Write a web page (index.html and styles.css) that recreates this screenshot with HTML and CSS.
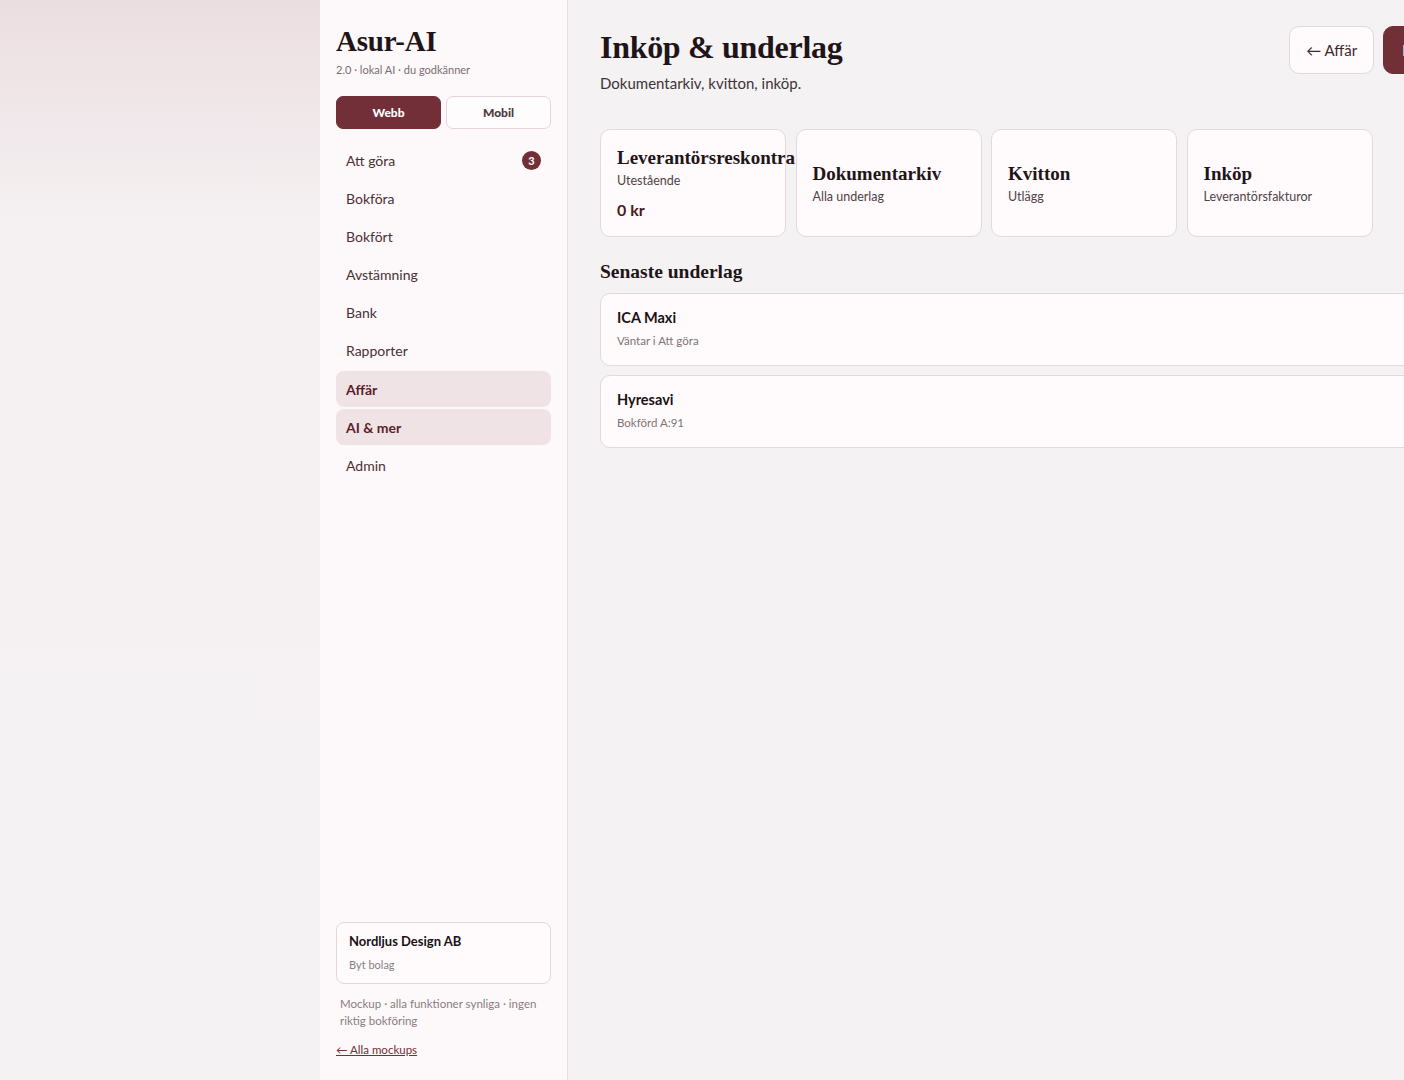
FILE: index.html
```html
<!DOCTYPE html>
<html lang="sv">
<head>
    <meta charset="UTF-8">
    <meta name="viewport" content="width=device-width, initial-scale=1.0">
    <title>Asur-AI · Inköp &amp; underlag</title>
    <link rel="stylesheet" href="styles.css">
</head>
<body>
    <div class="shell">
        <aside class="sidebar">
            <div class="brand">
                <h1>Asur-AI</h1>
                <p>2.0 · lokal AI · du godkänner</p>
            </div>
            <div class="mode-toggle">
                <button class="mode-btn active">Webb</button>
                <button class="mode-btn">Mobil</button>
            </div>
            <nav class="nav">
                <a class="nav-item" href="#">Att göra <span class="badge">3</span></a>
                <a class="nav-item" href="#">Bokföra</a>
                <a class="nav-item" href="#">Bokfört</a>
                <a class="nav-item" href="#">Avstämning</a>
                <a class="nav-item" href="#">Bank</a>
                <a class="nav-item" href="#">Rapporter</a>
                <a class="nav-item selected" href="#">Affär</a>
                <a class="nav-item selected" href="#">AI &amp; mer</a>
                <a class="nav-item" href="#">Admin</a>
            </nav>
            <div class="sidebar-foot">
                <div class="company">
                    <strong>Nordljus Design AB</strong>
                    <span>Byt bolag</span>
                </div>
                <p class="note">Mockup · alla funktioner synliga · ingen riktig bokföring</p>
                <a class="back-link" href="#">← Alla mockups</a>
            </div>
        </aside>

        <main class="main">
            <header class="page-head">
                <div>
                    <h2>Inköp &amp; underlag</h2>
                    <p>Dokumentarkiv, kvitton, inköp.</p>
                </div>
                <div class="actions">
                    <button class="btn">← Affär</button>
                    <button class="btn primary">Nytt</button>
                </div>
            </header>

            <section class="tiles">
                <div class="tile">
                    <h3>Leverantörsreskontra</h3>
                    <span>Utestående</span>
                    <b class="amount">0 kr</b>
                </div>
                <div class="tile">
                    <h3>Dokumentarkiv</h3>
                    <span>Alla underlag</span>
                </div>
                <div class="tile">
                    <h3>Kvitton</h3>
                    <span>Utlägg</span>
                </div>
                <div class="tile">
                    <h3>Inköp</h3>
                    <span>Leverantörsfakturor</span>
                </div>
            </section>

            <h4 class="section-title">Senaste underlag</h4>
            <div class="rows">
                <div class="row">
                    <strong>ICA Maxi</strong>
                    <span>Väntar i Att göra</span>
                </div>
                <div class="row">
                    <strong>Hyresavi</strong>
                    <span>Bokförd A:91</span>
                </div>
            </div>
        </main>
    </div>
</body>
</html>
```

FILE: styles.css
```css
html, body {
    margin: 0;
    height: 100%;
}
body {
    font-family: Lato, "Noto Sans", sans-serif;
    color: #1f1519;
    background: linear-gradient(180deg, #ebdee1 0, #f5f1f2 230px, #f5f2f3 100%);
    overflow: hidden;
}
.shell {
    display: flex;
    margin-left: 320px;
    width: 1163px;
    min-height: 100vh;
}
.sidebar {
    width: 248px;
    flex-shrink: 0;
    box-sizing: border-box;
    padding: 24px 16px 23px;
    background: #fdf8f9;
    border-right: 1px solid #e9dfe2;
    display: flex;
    flex-direction: column;
    height: 1080px;
}
.brand h1 {
    font-family: "Liberation Serif", serif;
    font-size: 29px;
    font-weight: 700;
    margin: 0;
    line-height: 34px;
    letter-spacing: -0.2px;
}
.brand p {
    margin: 5px 0 0;
    font-size: 11px;
    color: #7a6d72;
}
.mode-toggle {
    display: flex;
    gap: 5px;
    margin-top: 20px;
}
.mode-btn {
    flex: 1;
    height: 33px;
    border-radius: 7px;
    border: 1px solid #e3d5d9;
    background: #fffcfd;
    font-family: inherit;
    font-weight: 900;
    font-size: 12px;
    color: #4a3a40;
}
.mode-btn.active {
    background: #722f37;
    border-color: #722f37;
    color: #fff;
}
.nav {
    display: flex;
    flex-direction: column;
    gap: 2.2px;
    margin-top: 13px;
}
.nav-item {
    display: flex;
    align-items: center;
    justify-content: space-between;
    height: 36px;
    padding: 0 10px;
    border-radius: 8px;
    font-size: 14px;
    color: #4a3038;
    text-decoration: none;
}
.nav-item.selected {
    background: #f0e3e6;
    color: #5a1f2a;
    font-weight: 700;
}
.badge {
    width: 19px;
    height: 19px;
    border-radius: 50%;
    background: #722f37;
    color: #fff;
    font-size: 11px;
    font-weight: 700;
    display: flex;
    align-items: center;
    justify-content: center;
}
.sidebar-foot {
    margin-top: auto;
}
.company {
    display: flex;
    flex-direction: column;
    gap: 9px;
    padding: 10px 12px 12px;
    border: 1px solid #e4d6da;
    border-radius: 8px;
    background: #fffbfc;
}
.company strong {
    font-size: 13px;
    color: #1a1216;
}
.company span {
    font-size: 11px;
    color: #8a7d82;
}
.note {
    margin: 11px 0 0;
    padding: 0 4px;
    font-size: 11.5px;
    line-height: 17px;
    color: #8a7d82;
}
.back-link {
    display: inline-block;
    margin-top: 14px;
    font-size: 11.5px;
    color: #722f37;
}
.main {
    flex: 1;
    min-width: 0;
    background: #f5f2f3;
    padding: 26px 32px;
}
.page-head {
    display: flex;
    justify-content: space-between;
    align-items: flex-start;
}
.page-head h2 {
    font-family: "Liberation Serif", serif;
    font-size: 32px;
    font-weight: 700;
    margin: 0;
    line-height: 42px;
    letter-spacing: -0.3px;
}
.page-head p {
    margin: 6px 0 0;
    font-size: 15px;
    color: #3e3338;
}
.actions {
    display: flex;
    gap: 9px;
}
.btn {
    height: 48px;
    padding: 0 16px;
    border-radius: 10px;
    border: 1px solid #e4d6da;
    background: #fffbfc;
    font-family: inherit;
    font-size: 15px;
    color: #3a2a30;
}
.btn.primary {
    background: #722f37;
    border-color: #722f37;
    color: #fff;
    font-weight: 700;
    padding: 0 18px;
}
.tiles {
    display: grid;
    grid-template-columns: repeat(4, 186px);
    gap: 9.5px;
    margin-top: 37px;
}
.tile {
    height: 108px;
    box-sizing: border-box;
    padding: 16px;
    border: 1px solid #e4d8db;
    border-radius: 10px;
    background: #fffafb;
    display: flex;
    flex-direction: column;
    justify-content: center;
}
.tile h3 {
    font-family: "Liberation Serif", serif;
    font-size: 19px;
    font-weight: 700;
    margin: 0;
    white-space: nowrap;
    line-height: 22px;
}
.tile span {
    font-size: 12.5px;
    color: #4f4348;
    margin-top: 4px;
}
.tile .amount {
    font-size: 16px;
    color: #4a1a22;
    margin-top: 12px;
}
.section-title {
    font-family: "Liberation Serif", serif;
    font-size: 19.5px;
    font-weight: 700;
    margin: 24px 0 10px;
    color: #1f1519;
}
.rows {
    display: flex;
    flex-direction: column;
    gap: 9px;
}
.row {
    height: 73px;
    box-sizing: border-box;
    padding: 15px 16px 14px;
    border: 1px solid #e4d8db;
    border-radius: 10px;
    background: #fffafb;
    display: flex;
    flex-direction: column;
    gap: 8px;
}
.row strong {
    font-size: 14.5px;
    color: #1a1216;
}
.row span {
    font-size: 11.5px;
    color: #7f7277;
}
```
